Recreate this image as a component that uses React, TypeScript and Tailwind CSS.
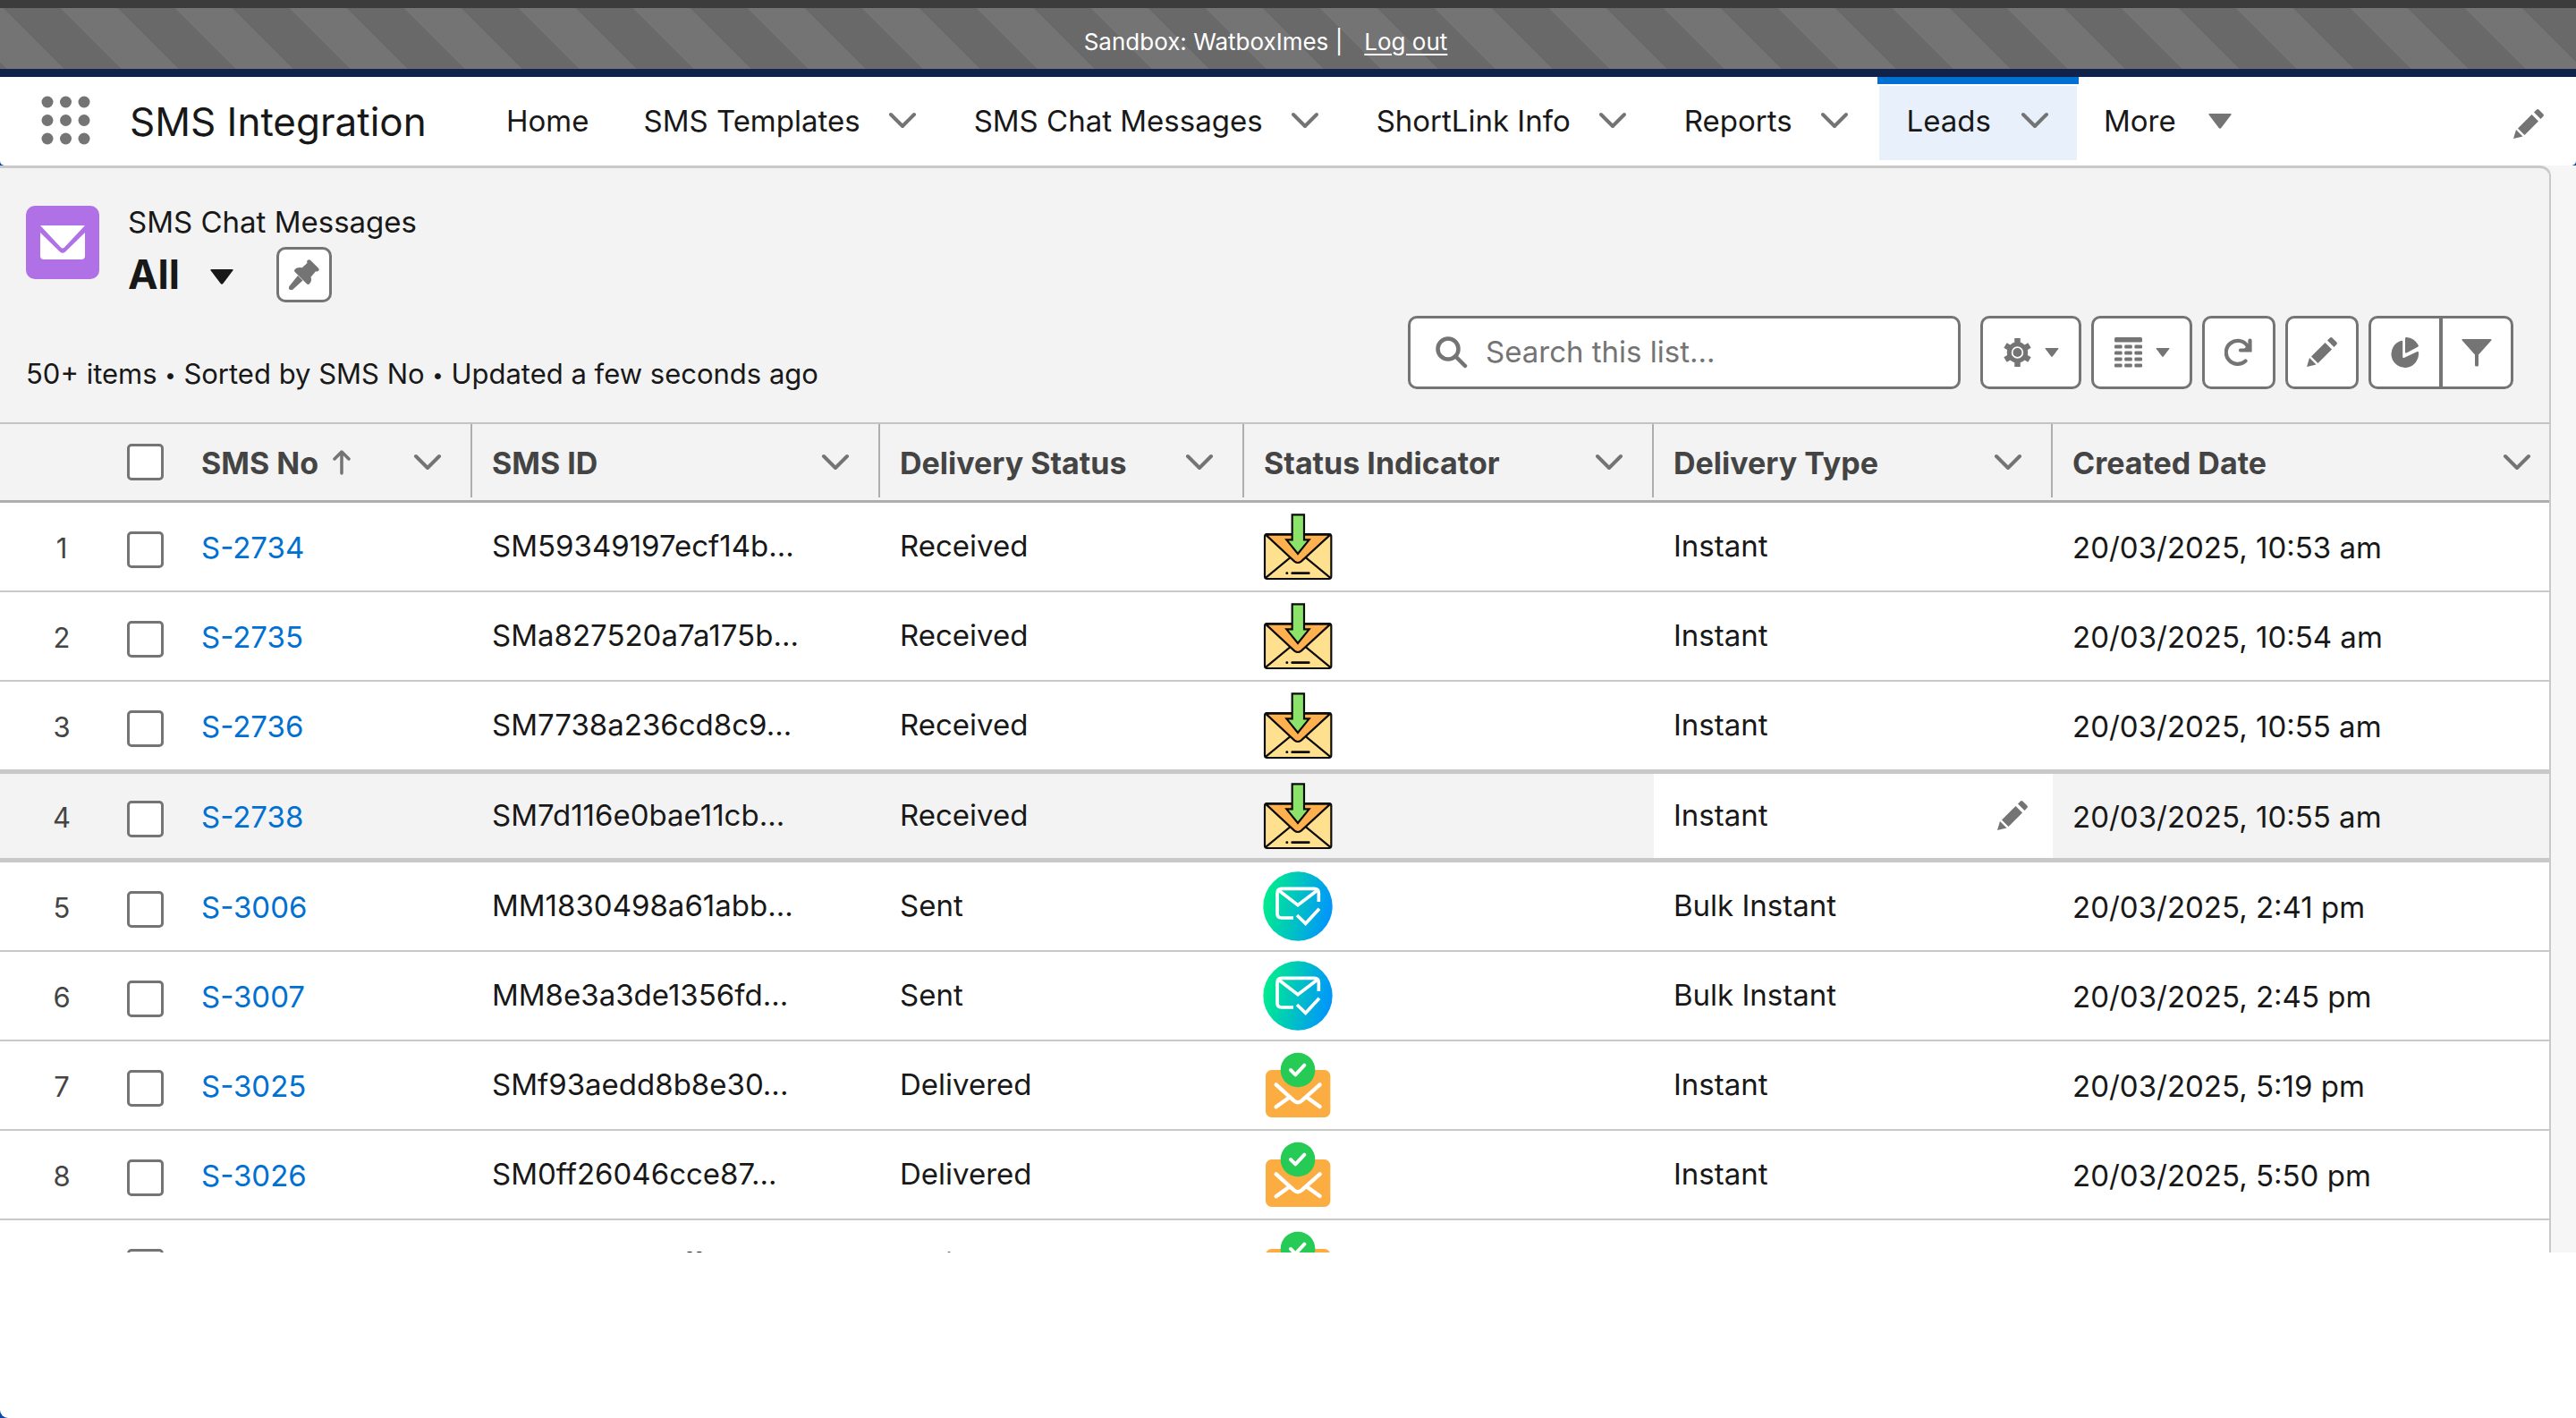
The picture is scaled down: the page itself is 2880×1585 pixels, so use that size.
import type { ReactNode } from "react";

type Status = "Received" | "Sent" | "Delivered";

const tabs = ["SMS Templates", "SMS Chat Messages", "ShortLink Info", "Reports"];

const columns = ["SMS ID", "Delivery Status", "Status Indicator", "Delivery Type", "Created Date"];

const rows: { no: string; id: string; status: Status; type: string; date: string }[] = [
  { no: "S-2734", id: "SM59349197ecf14b...", status: "Received", type: "Instant", date: "20/03/2025, 10:53 am" },
  { no: "S-2735", id: "SMa827520a7a175b...", status: "Received", type: "Instant", date: "20/03/2025, 10:54 am" },
  { no: "S-2736", id: "SM7738a236cd8c9...", status: "Received", type: "Instant", date: "20/03/2025, 10:55 am" },
  { no: "S-2738", id: "SM7d116e0bae11cb...", status: "Received", type: "Instant", date: "20/03/2025, 10:55 am" },
  { no: "S-3006", id: "MM1830498a61abb...", status: "Sent", type: "Bulk Instant", date: "20/03/2025, 2:41 pm" },
  { no: "S-3007", id: "MM8e3a3de1356fd...", status: "Sent", type: "Bulk Instant", date: "20/03/2025, 2:45 pm" },
  { no: "S-3025", id: "SMf93aedd8b8e30...", status: "Delivered", type: "Instant", date: "20/03/2025, 5:19 pm" },
  { no: "S-3026", id: "SM0ff26046cce87...", status: "Delivered", type: "Instant", date: "20/03/2025, 5:50 pm" },
  { no: "S-3027", id: "SMb0c5d9b2ff1d4...", status: "Delivered", type: "Instant", date: "20/03/2025, 5:52 pm" },
];

const activeRow = 3;

function Chevron() {
  return (
    <svg viewBox="0 0 32 20" className="h-5 w-8 shrink-0" fill="none" stroke="#747474" strokeWidth="4" strokeLinecap="round" strokeLinejoin="round">
      <path d="M3 3l13 13L29 3" />
    </svg>
  );
}

function Triangle({ className }: { className: string }) {
  return (
    <svg viewBox="0 0 26 17" className={className} fill="currentColor">
      <path d="M1.5 0h23q2 0 .8 1.6L14.3 16q-1.3 1.6-2.6 0L.7 1.6Q-.5 0 1.500 0z" />
    </svg>
  );
}

function Pencil() {
  return (
    <svg viewBox="0 0 34 34" className="h-[34px] w-[34px]" fill="#747474">
      <path d="M0 33l3-10 7.500 7.500z" />
      <path d="M5 21.500L20.500 6l7.500 7.500L12.500 29z" />
      <path d="M23 3.500L26 .6q1.200-1 2.400 0l5 5q1 1.200 0 2.400l-2.900 3z" />
    </svg>
  );
}

function ReceivedIcon() {
  return (
    <svg viewBox="156 33 234 234" className="h-[78px] w-[78px]" stroke="#0b0b0b" strokeWidth="6.500" strokeLinejoin="round" strokeLinecap="round">
      <rect x="162" y="108" width="223" height="150" rx="8" fill="#ffe08f" />
      <path d="M166 254L246 188M381 254L301 188" fill="none" />
      <path d="M165 110h217L284 200q-11 8-22 0z" fill="#ffb04f" />
      <path d="M254 43h40v84h17L273 174L235 127h19z" fill="#8be36a" strokeLinejoin="miter" />
      <path d="M254 239h56M236 239h1" strokeWidth="8" />
    </svg>
  );
}

function SentIcon() {
  return (
    <svg viewBox="156 98 234 234" className="h-[78px] w-[78px]">
      <defs>
        <linearGradient id="sent" x1="0" y1="0.400" x2="1" y2="0.600">
          <stop offset="0" stopColor="#00ee8c" />
          <stop offset="1" stopColor="#0093ff" />
        </linearGradient>
      </defs>
      <circle cx="273" cy="215" r="116" fill="url(#sent)" />
      <g fill="none" stroke="#fff" strokeWidth="11">
        <path d="M258 254h-40q-14 0-14-14v-69q0-15 15-15h109q15 0 15 15v29" />
        <path d="M208 161l65 50 66-50" />
        <path d="M270 245l29 28 46-50" />
      </g>
    </svg>
  );
}

function DeliveredIcon() {
  return (
    <svg viewBox="156 702 234 234" className="h-[78px] w-[78px]" fill="none" stroke="#fff" strokeLinecap="round" strokeLinejoin="round">
      <rect x="165" y="768" width="217" height="159" rx="20" fill="#fbad41" stroke="none" />
      <path d="M200 817l60 54q13 11 26 0l61-54M200 892l44-32M347 891l-43-31" strokeWidth="13" />
      <circle cx="273" cy="768" r="58" fill="#25cb54" stroke="none" />
      <path d="M249 768l16 16 30-32" strokeWidth="12" />
    </svg>
  );
}

const statusIcons: Record<Status, ReactNode> = {
  Received: <ReceivedIcon />,
  Sent: <SentIcon />,
  Delivered: <DeliveredIcon />,
};

function Checkbox({ label }: { label: string }) {
  return (
    <input
      type="checkbox"
      aria-label={label}
      className="block h-[41px] w-[41px] appearance-none rounded-[5px] border-[3px] border-[#747474] bg-white"
    />
  );
}

function ToolButton({ label, className, children }: { label: string; className: string; children: ReactNode }) {
  return (
    <button
      type="button"
      aria-label={label}
      className={`flex h-[82px] items-center justify-center border-[3px] border-[#747474] bg-white text-[#747474] ${className}`}
    >
      {children}
    </button>
  );
}

function NavBar() {
  return (
    <nav className="flex h-[99px] items-start rounded-b-[5px] bg-white">
      <button type="button" aria-label="App launcher" className="ml-[46px] mt-[21px]">
        <svg viewBox="0 0 55 55" className="h-[55px] w-[55px]" fill="#747474">
          {[7, 27.5, 48].map((y) => [7, 27.5, 48].map((x) => <circle key={`${x}-${y}`} cx={x} cy={y} r="6.500" />))}
        </svg>
      </button>
      <h1 className="ml-11 w-[388px] pt-5 text-[44px] leading-[60px]">SMS Integration</h1>
      <a href="#" className="mx-[33px] pt-7 leading-[42px]">
        Home
      </a>
      {tabs.map((tab) => (
        <div key={tab} className="flex gap-[31px] px-8 pt-7 leading-[42px] first-of-type:pl-7">
          <a href="#">{tab}</a>
          <button type="button" aria-label={`${tab} menu`}>
            <Chevron />
          </button>
        </div>
      ))}
      <div className="border-t-8 border-[#0070d2]">
        <div className="mx-[2px] mt-[2px] flex h-[83px] gap-[33px] bg-[#e8f0fb] px-[31px] pt-[18px] leading-[42px]">
          <a href="#">Leads</a>
          <button type="button" aria-label="Leads menu" className="h-[42px]">
            <Chevron />
          </button>
        </div>
      </div>
      <button type="button" className="ml-7 mt-7 flex items-center gap-9 leading-[42px]">
        More
        <Triangle className="h-[17px] w-[26px] text-[#747474]" />
      </button>
      <button type="button" aria-label="Edit navigation" className="ml-auto mr-9 mt-9">
        <Pencil />
      </button>
    </nav>
  );
}

function ListHeader() {
  return (
    <header className="flex h-[284px] items-end justify-between pb-[37px] pl-[29px] pr-10">
      <div className="self-start pt-[42px]">
        <div className="flex">
          <svg viewBox="0 0 82 82" className="h-[82px] w-[82px]">
            <rect width="82" height="82" rx="10" fill="#b070e6" />
            <path d="M16 22h50L43 46.500q-2 2-4 0z" fill="#fff" />
            <path d="M16 30l22 21.500q3 2.500 6 0L66 30v26q0 4-4 4H20q-4 0-4-4z" fill="#fff" />
          </svg>
          <div className="ml-8">
            <p className="leading-9">SMS Chat Messages</p>
            <div className="flex items-center pt-[10px]">
              <h2 className="text-[45px] font-bold leading-[60px]">All</h2>
              <button type="button" aria-label="Select a list view" className="ml-[34px] mt-1">
                <Triangle className="h-[17px] w-[26px]" />
              </button>
              <button
                type="button"
                aria-label="Pin this list view"
                className="ml-12 flex h-[62px] w-[62px] items-center justify-center rounded-[10px] border-[3px] border-[#747474] bg-white"
              >
                <svg viewBox="0 0 34 34" className="h-[34px] w-[34px]" fill="#747474">
                  <path d="M21 .8q1.500-1.300 3 0l9 9q1.300 1.500 0 3-1.500 1.300-3 .5l-5.500 6.500q1.500 5-1.500 7.500-1.500 1.300-3 0L6.700 14q-1.300-1.500 0-3 2.500-3 8-1.700L20.500 4q-.8-2 .5-3.200z" />
                  <path d="M10 18l5.500 5.500L4.500 33.500Q2 35 .6 33.400-.8 32 .6 29.700z" />
                </svg>
              </button>
            </div>
          </div>
        </div>
        <p className="pt-[60px] text-[31px] leading-10">
          50+ items <span className="align-[2px] text-[22px]">•</span> Sorted by SMS No{" "}
          <span className="align-[2px] text-[22px]">•</span> Updated a few seconds ago
        </p>
      </div>

      <div className="flex gap-[11px]">
        <label className="mr-[11px] flex h-[82px] w-[618px] items-center rounded-[10px] border-[3px] border-[#747474] bg-white pl-7">
          <svg viewBox="0 0 36 36" className="h-9 w-9" fill="none" stroke="#747474" strokeWidth="4.500" strokeLinecap="round">
            <circle cx="14" cy="14" r="11.500" />
            <path d="M22.500 22.500L33 33" />
          </svg>
          <input
            type="search"
            aria-label="Search this list"
            placeholder="Search this list..."
            className="ml-5 min-w-0 flex-1 bg-transparent placeholder:text-[#747474]"
          />
        </label>
        <ToolButton label="List view controls" className="w-[113px] gap-[14px] rounded-[10px]">
          <svg viewBox="0 0 33 34" className="h-[34px] w-[33px]" fill="none" stroke="currentColor">
            <circle cx="16.500" cy="17" r="9.200" strokeWidth="5" />
            <path d="M16.500 1v6M16.500 27v6M3 9l5 3M25 22l5 3M30 9l-5 3M8 22l-5 3" strokeWidth="6.500" strokeLinecap="butt" />
            <circle cx="16.500" cy="17" r="5" fill="currentColor" stroke="none" />
          </svg>
          <Triangle className="h-[10px] w-4" />
        </ToolButton>
        <ToolButton label="Select list display" className="w-[113px] gap-[14px] rounded-[10px]">
          <svg viewBox="0 0 32 34" className="h-[34px] w-8" fill="currentColor">
            <rect width="31" height="5.500" rx="1.500" />
            {[8.5, 15.5, 22.5, 29.5].map((y) =>
              [0, 11.2, 22.4].map((x) => <rect key={`${x}-${y}`} x={x} y={y} width="8.600" height="4" rx="1.200" />),
            )}
          </svg>
          <Triangle className="h-[10px] w-4" />
        </ToolButton>
        <ToolButton label="Refresh" className="w-[82px] rounded-[10px]">
          <svg viewBox="0 0 32 32" className="h-8 w-8" fill="none" stroke="currentColor" strokeWidth="4.200" strokeLinecap="round">
            <path d="M23.500 25.500A13 13 0 1 1 25.500 8.500" />
            <path d="M28.500 2.500v11H18" strokeLinejoin="miter" />
            <path d="M20 14L28.500 5v9z" fill="currentColor" stroke="none" />
          </svg>
        </ToolButton>
        <ToolButton label="Edit list" className="w-[82px] rounded-[10px]">
          <Pencil />
        </ToolButton>
        <div className="flex">
          <ToolButton label="Show charts" className="w-[82px] rounded-l-[10px]">
            <svg viewBox="0 0 32 34" className="h-[34px] w-8" fill="currentColor">
              <path d="M12 3.800q1.200-.2 1.200 1V22q.3 1.700 2 .8L29.500 16q1.200-.4 1.500.8A15.300 15.300 0 1 1 12 3.800z" />
              <path d="M16 1.300q0-1.300 1.300-1.300 9 .8 13.400 8.700.7 1.300-.6 2L17.500 17.500Q16 18 16 16.500z" />
            </svg>
          </ToolButton>
          <ToolButton label="Show filters" className="-ml-[2px] w-[82px] rounded-r-[10px]">
            <svg viewBox="0 0 34 34" className="h-[34px] w-[34px]" fill="currentColor">
              <path d="M1.500 2h31q1.800.2.600 1.800L19 19.500V31q0 1.500-1.500 1.500h-1Q15 32.500 15 31V19.500L.9 3.800Q-.3 2.200 1.500 2z" />
            </svg>
          </ToolButton>
        </div>
      </div>
    </header>
  );
}

function MessagesTable() {
  return (
    <div className="h-[928px] overflow-hidden border-t-2 border-[#c4c4c4] bg-white">
      <table className="w-full table-fixed border-separate border-spacing-0 text-left">
        <colgroup>
          <col className="w-[122px]" />
          <col className="w-[82px]" />
          <col className="w-[324px]" />
          <col className="w-[456px]" />
          <col className="w-[407px]" />
          <col className="w-[458px]" />
          <col className="w-[446px]" />
          <col />
        </colgroup>
        <thead className="bg-[#f3f3f3] text-[34px] text-[#444444]">
          <tr>
            <th aria-label="Row number" className="h-[88px] border-b-[3px] border-[#aeaeae]" />
            <th className="border-b-[3px] border-[#aeaeae] pl-5">
              <Checkbox label="Select all" />
            </th>
            <th className="border-b-[3px] border-[#aeaeae] align-top">
              <div className="flex h-[82px] items-center border-r-2 border-[#aeaeae] pl-[21px] pr-8 pt-1">
                SMS No
                <svg viewBox="0 0 20 28" className="ml-4 h-7 w-5" fill="none" stroke="#747474" strokeWidth="3.500" strokeLinecap="round" strokeLinejoin="round">
                  <path d="M10 26V3M2 10l8-8 8 8" />
                </svg>
                <button type="button" aria-label="SMS No actions" className="ml-auto">
                  <Chevron />
                </button>
              </div>
            </th>
            {columns.map((column) => (
              <th key={column} className="group border-b-[3px] border-[#aeaeae] align-top">
                <div className="flex h-[82px] items-center justify-between border-r-2 border-[#aeaeae] pl-[22px] pr-8 pt-1 group-last:border-r-0 group-last:pr-5">
                  {column}
                  <button type="button" aria-label={`${column} actions`}>
                    <Chevron />
                  </button>
                </div>
              </th>
            ))}
          </tr>
        </thead>
        <tbody>
          {rows.map((row, i) => {
            const active = i === activeRow;
            const border = active
              ? "h-[102px] border-t-[3px] border-b-[5px] border-[#c9c9c9]"
              : "h-[100px] border-b-2 border-[#c9c9c9]";
            return (
              <tr key={row.no} className={active ? "bg-[#f3f3f3]" : "bg-white"}>
                <td className={`${border} pl-4 pt-1 text-center text-[31px] text-[#444444]`}>{i + 1}</td>
                <td className={`${border} pl-5 pt-[6px]`}>
                  <Checkbox label={`Select ${row.no}`} />
                </td>
                <td className={`${border} pl-[21px] pt-1`}>
                  <a href="#" className="text-[#0070d2]">
                    {row.no}
                  </a>
                </td>
                <td className={`${border} pl-[22px]`}>{row.id}</td>
                <td className={`${border} pl-[22px]`}>{row.status}</td>
                <td className={`${border} pl-[21px]`}>{statusIcons[row.status]}</td>
                <td className={`${border} pl-[22px] pr-7 ${active ? "bg-white" : ""}`}>
                  <div className="flex items-center justify-between">
                    {row.type}
                    {active && (
                      <button type="button" aria-label="Edit Delivery Type">
                        <Pencil />
                      </button>
                    )}
                  </div>
                </td>
                <td className={`${border} pl-[22px] pt-1`}>{row.date}</td>
              </tr>
            );
          })}
        </tbody>
      </table>
    </div>
  );
}

export default function App() {
  return (
    <div className="min-h-screen bg-[#0b4aa8] font-[Inter,sans-serif] text-[33px] text-[#181818]">
      {/* Sandbox banner */}
      <div className="flex h-[86px] items-center justify-center gap-6 border-b-[9px] border-t-[9px] border-b-[#10234a] border-t-[#3c3c3c] bg-[linear-gradient(45deg,#747474_25%,#696969_25%,#696969_50%,#747474_50%,#747474_75%,#696969_75%)] bg-[length:128px_128px] bg-[position:67px_0px] pr-[50px] pt-[6px] text-[26px] text-white">
        <span>Sandbox: WatboxImes |</span>
        <a href="#" className="underline underline-offset-4">
          Log out
        </a>
      </div>

      <NavBar />

      <div className="flex min-h-[1400px] flex-col rounded-bl-[9px] bg-white">
        <div className="bg-[#f6f6f6] pr-7">
          <main className="rounded-tr-[12px] border-r-2 border-t-[3px] border-[#c9c9c9] bg-[#f3f3f3]">
            <ListHeader />
            <MessagesTable />
          </main>
        </div>
      </div>
    </div>
  );
}
